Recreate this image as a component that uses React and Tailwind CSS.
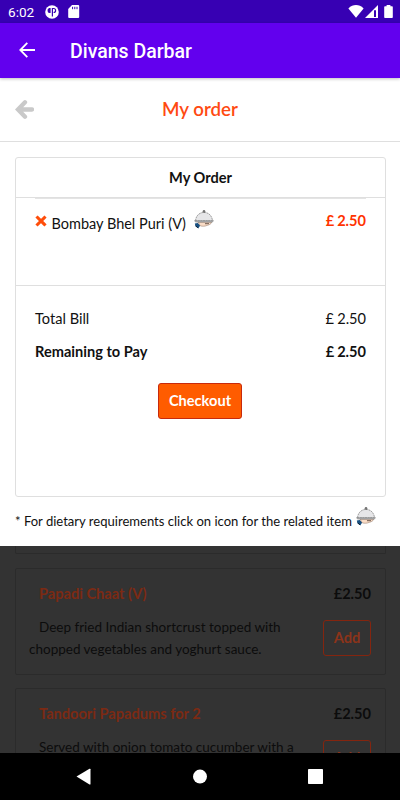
import React from "react";

const menuItems = [
  {
    name: "Papadi Chaat (V)",
    price: "£2.50",
    lines: ["Deep fried Indian shortcrust topped with", "chopped vegetables and yoghurt sauce."],
  },
  {
    name: "Tandoori Papadums for 2",
    price: "£2.50",
    lines: ["Served with onion tomato cucumber with a"],
  },
];

function ServingIcon() {
  return (
    <svg width="20" height="19" viewBox="0 0 20 19" className="shrink-0">
      <path d="M0.8 13.6l3-0.6 2.4 2.6-1.8 2.6L1.6 16.6z" fill="#174f80" />
      <path d="M1.6 15.8l2.6 2.2" stroke="#10243a" strokeWidth="1" />
      <path d="M4 12.2h13.6c-0.4 2-2.4 2.6-4.4 3.2-2.2 0.9-4.6 1.1-6.8 0.5z" fill="#fadcc6" stroke="#8a7264" strokeWidth="0.5" />
      <path d="M11 13.7h4" stroke="#4a352b" strokeWidth="0.8" />
      <path d="M1.5 10.8C1.9 5.6 5.5 2.4 10 2.4s8.1 3.2 8.5 8.4z" fill="#e6e6e8" stroke="#666" strokeWidth="0.6" strokeDasharray="2 0.6" />
      <path d="M0.4 10.8h19.2l-1.4 1.3H1.8z" fill="#bdbec0" stroke="#555" strokeWidth="0.4" />
      <circle cx="10" cy="1.4" r="1" fill="#999" stroke="#333" strokeWidth="0.6" />
    </svg>
  );
}

function StatusBar() {
  return (
    <div className="flex h-[23px] items-center bg-[#3700b3] pl-2 pr-[7px] text-white">
      <span className="w-[37px] pt-[2px] font-[Roboto] text-[13.6px] leading-none">6:02</span>
      <svg width="14" height="14" viewBox="0 0 14 14">
        <circle cx="7" cy="7" r="6.8" fill="#fff" />
        <path d="M5.6 3v5H4.4A2 2 0 0 1 2.6 6V4.4L4 3z" fill="#3700b3" />
        <path d="M7.4 11.4V3.5h1.2a2 2 0 0 1 0 4" fill="none" stroke="#3700b3" strokeWidth="1.2" />
      </svg>
      <svg width="12" height="13" viewBox="0 0 12 13" className="ml-[9px]">
        <path d="M4 0h6.2a1 1 0 0 1 1 1v11a1 1 0 0 1-1 1H1.2a1 1 0 0 1-1-1V4z" fill="#fff" />
        <path d="M4.6 1.8v2.4M6.8 1.8v2.4M9 1.8v2.4" stroke="#3700b3" strokeWidth="1" />
      </svg>
      <svg width="16" height="13" viewBox="0 0 16 13" className="ml-auto">
        <path d="M0.4 3.4C5-1 11-1 15.6 3.4L8 12.8z" fill="#fff" />
      </svg>
      <svg width="13" height="13" viewBox="0 0 13 13" className="ml-px">
        <path d="M0 13L13 0v13z" fill="#fff" />
        <path d="M9 5.3h2V12H9z" fill="#3700b3" />
      </svg>
      <svg width="9" height="13" viewBox="0 0 9 13" className="ml-1.5">
        <path d="M2.6 0h3.8v1.2h1.6a0.8 0.8 0 0 1 0.8 0.8v10.2a0.8 0.8 0 0 1-0.8 0.8H1a0.8 0.8 0 0 1-0.8-0.8V2A0.8 0.8 0 0 1 1 1.2h1.6z" fill="#fff" />
      </svg>
    </div>
  );
}

function AppBar() {
  return (
    <div className="z-10 flex h-[54.5px] items-center bg-[#6200ee] pl-[19px] text-white shadow-[0_1px_3px_rgba(0,0,0,0.25)]">
      <svg width="16" height="16" viewBox="0 0 16 16" fill="none" stroke="#fff" strokeWidth="1.8">
        <path d="M16 8H1.6M8.3 0.9L1.3 8l7 7.1" />
      </svg>
      <h1 className="ml-[35px] pt-0.5 font-[Roboto] text-[19.5px] font-medium leading-none">Divans Darbar</h1>
    </div>
  );
}

function OrderCard() {
  return (
    <div className="ml-[15px] mr-[14px] mt-[15px] flex h-[340px] flex-col rounded-[3px] border border-[#dfdfdf]">
      <div className="flex h-10 shrink-0 items-center justify-center border-b border-[#dfdfdf] pt-px font-bold">
        My Order
      </div>
      <div className="h-[88px] shrink-0 border-b border-[#dfdfdf] px-[19px]">
        <hr className="border-t border-[#e4e4e4]" />
        <div className="flex pt-[11px]">
          <svg width="12" height="12" viewBox="0 0 12 12" className="mt-[5px]">
            <path d="M2.6 2.6l6.8 6.8M9.4 2.6l-6.8 6.8" stroke="#ff4d0a" strokeWidth="3.1" strokeLinecap="square" />
          </svg>
          <span className="ml-[4.5px] mt-[3px] text-[14.5px] leading-[22px]">Bombay Bhel Puri (V)</span>
          <span className="ml-[8px]">
            <ServingIcon />
          </span>
          <span className="ml-auto font-bold leading-[22px] text-[#ff3300] [word-spacing:-0.6px]">£ 2.50</span>
        </div>
      </div>
      <div className="px-[19px] pt-[22px]">
        <div className="flex justify-between leading-[22px]">
          <span>Total Bill</span>
          <span className="[word-spacing:-0.6px]">£ 2.50</span>
        </div>
        <div className="mt-[11px] flex justify-between font-bold leading-[22px]">
          <span>Remaining to Pay</span>
          <span className="[word-spacing:-0.6px]">£ 2.50</span>
        </div>
      </div>
      <button className="ml-[142px] mt-5 h-9 w-[84px] rounded-[3px] border border-[#c82a0c] bg-[#ff5c00] font-bold text-white">
        Checkout
      </button>
    </div>
  );
}

function MenuCard({ item }) {
  return (
    <div className="mb-[13px] ml-[15px] mr-[14px] h-[107px] shrink-0 rounded-[2px] border border-[#2b2b2b] pl-[13px] pr-[14px] pt-[14px]">
      <div className="flex justify-between pl-[10px] font-bold leading-[22px]">
        <span className="text-[#7c2a13]">{item.name}</span>
        <span className="text-[#0c0c0c]">{item.price}</span>
      </div>
      <div className="flex justify-between pt-[11px]">
        <p className="whitespace-nowrap text-[13.5px] leading-[22px] text-[#0c0c0c]">
          <span className="pl-[10px]">{item.lines[0]}</span>
          <br />
          {item.lines[1]}
        </p>
        <button className="mt-[4px] h-9 w-[48px] rounded-[3px] border border-[#84250f] font-bold text-[#8c331a]">
          Add
        </button>
      </div>
    </div>
  );
}

function NavBar() {
  return (
    <div className="flex h-[47px] shrink-0 items-center bg-black">
      <svg width="400" height="47" viewBox="0 0 400 47" fill="#fff">
        <path d="M76.5 23.5L89.5 15.8q1-0.5 1 0.5v14.6q0 1-1 0.5z" />
        <circle cx="200" cy="23.6" r="7" />
        <rect x="308" y="16" width="15" height="15" rx="0.8" />
      </svg>
    </div>
  );
}

function App() {
  return (
    <div className="flex h-[800px] w-[400px] flex-col overflow-hidden bg-white font-[Lato,sans-serif] text-[14.6px] text-[#111]">
      <StatusBar />
      <AppBar />
      <div className="h-[468.5px] shrink-0 bg-white">
        <div className="flex h-[64px] items-center border-b border-[#dfdfdf] px-[15px]">
          <svg width="19" height="19" viewBox="0 0 19 19" fill="none" stroke="#c9c9c9" strokeWidth="4.3">
            <path d="M17 9.5H4M10 2.3L3 9.5l7 7.2" strokeLinecap="round" />
          </svg>
          <h2 className="flex-1 pr-[19px] pt-px text-center text-[18.7px] font-semibold text-[#ff4a12]">My order</h2>
        </div>
        <OrderCard />
        <div className="ml-[15px] flex items-start whitespace-nowrap pt-[10px]">
          <span className="mt-[3px] text-[13.05px] leading-[22px]">
            * For dietary requirements click on icon for the related item
          </span>
          <span className="ml-[4px]">
            <ServingIcon />
          </span>
        </div>
      </div>
      <div className="flex min-h-0 flex-1 flex-col overflow-hidden bg-[#333]">
        <div className="mb-[14px] ml-[15px] mr-[14px] h-[8px] shrink-0 rounded-b-[2px] border border-t-0 border-[#2b2b2b]" />
        {menuItems.map((item) => (
          <MenuCard key={item.name} item={item} />
        ))}
      </div>
      <NavBar />
    </div>
  );
}

export default App;
